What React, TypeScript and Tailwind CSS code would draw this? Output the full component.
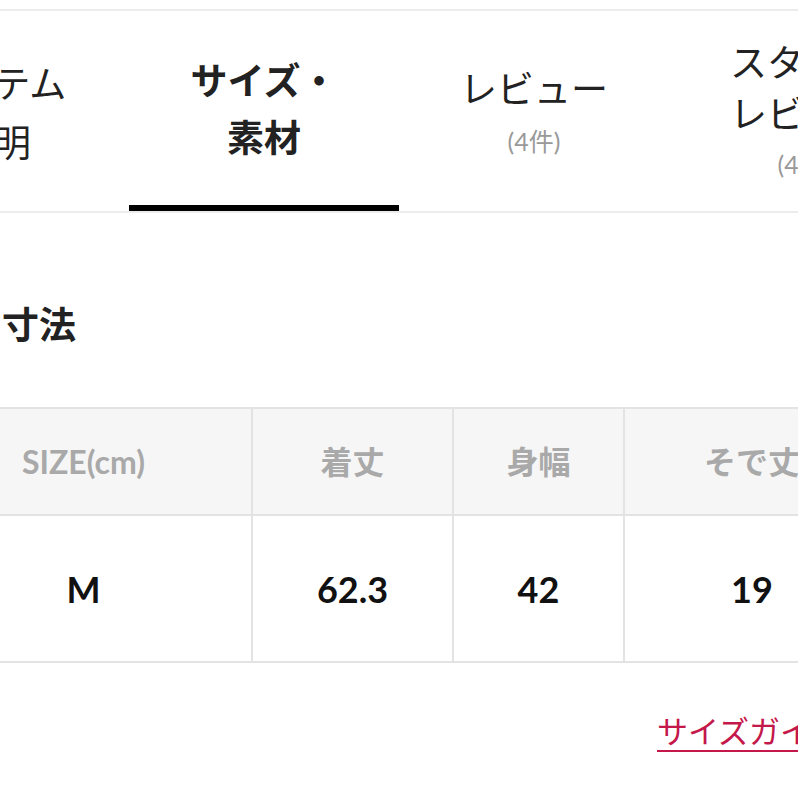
const jp = "font-['Noto_Sans_CJK_JP',sans-serif]";
const mixed = "font-['Lato','Noto_Sans_CJK_JP',sans-serif]";

const cols = [
  { head: "SIZE(cm)", value: "M" },
  { head: "着丈", value: "62.3" },
  { head: "身幅", value: "42" },
  { head: "そで丈", value: "19" },
];

function Tabs() {
  return (
    <div className={`flex ml-[-141px] border-y-2 border-[#ececec] text-[#222] ${jp}`}>
      <div className="w-[270px] h-[200px] shrink-0 flex flex-col items-center justify-center border-b-[6px] border-transparent">
        <div className="pt-[8px] text-[37px] leading-[59px] text-center">
          <div>アイテム</div>
          <div>説明</div>
        </div>
      </div>
      <div className="w-[270px] h-[200px] shrink-0 flex flex-col items-center justify-center border-b-[6px] border-black">
        <div className="text-[37px] leading-[57px] font-bold text-center">
          <div>サイズ・</div>
          <div>素材</div>
        </div>
      </div>
      <div className="w-[270px] h-[200px] shrink-0 flex flex-col items-center justify-center border-b-[6px] border-transparent">
        <div className="pt-[13px] text-center">
          <div className="text-[37px] leading-[52px]">レビュー</div>
          <div className={`text-[25px] leading-[56px] text-[#999] ${mixed}`}>(4件)</div>
        </div>
      </div>
      <div className="w-[270px] h-[200px] shrink-0 flex flex-col items-center justify-center border-b-[6px] border-transparent">
        <div className="pt-[11px] text-center">
          <div className="text-[37px] leading-[51px]">スタッフ</div>
          <div className="text-[37px] leading-[51px]">レビュー</div>
          <div className={`text-[25px] leading-[53px] text-[#999] ${mixed}`}>(4件)</div>
        </div>
      </div>
    </div>
  );
}

function SizeTable() {
  return (
    <div className={`ml-[-84px] w-[966px] border-y-2 border-[#e3e3e3] bg-[#e3e3e3] grid grid-cols-[335px_199px_169px_254px] gap-[2px] ${mixed}`}>
      {cols.map((c) => (
        <div
          key={c.head}
          className="h-[105px] bg-[#f6f6f6] flex items-center justify-center text-[32px] font-bold text-[#a9a9a9] whitespace-nowrap"
        >
          {c.head}
        </div>
      ))}
      {cols.map((c) => (
        <div
          key={c.value}
          className="h-[145px] bg-white flex items-center justify-center text-[36px] font-bold text-[#111]"
        >
          {c.value}
        </div>
      ))}
    </div>
  );
}

export default function App() {
  return (
    <div className="w-[798px] h-[798px] overflow-hidden bg-white pt-[9px]">
      <Tabs />

      <h2 className={`mt-[83px] ml-[2px] text-[37px] leading-[54px] font-bold text-[#222] ${jp}`}>寸法</h2>

      <div className="mt-[57px]">
        <SizeTable />
      </div>

      <div className="mt-[47px] ml-[657px] whitespace-nowrap">
        <span className={`inline-block text-[31px] leading-[40px] text-[#c4174a] border-b-2 border-[#c4174a] ${jp}`}>
          サイズガイド
        </span>
      </div>
    </div>
  );
}
